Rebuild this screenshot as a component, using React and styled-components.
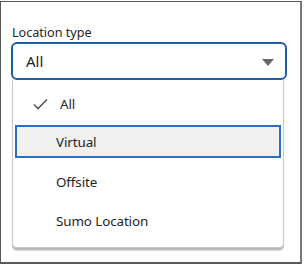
import React from 'react';
import styled, {createGlobalStyle} from 'styled-components';

const Global = createGlobalStyle`
  body {
    margin: 0;
    background: #fff;
    font-family: "Noto Sans", "Open Sans", sans-serif;
    color: #242424;
  }
`;

const Frame = styled.div`
  box-sizing: border-box;
  width: 302px;
  height: 263px;
  margin-top: 1px;
  border: 1px solid #5a5a5a;
  border-right: 2px solid #7a7a7a;
  border-bottom: 2px solid #5a5a5a;
  padding: 22px 0 0 10px;
`;

const Label = styled.div`
  font-size: 12.6px;
  line-height: 18px;
  margin-left: 1px;
  margin-bottom: 0;
`;

const SelectBox = styled.div`
  box-sizing: border-box;
  width: 276px;
  height: 38px;
  border: 2.5px solid #1c5ea9;
  border-radius: 6px;
  display: flex;
  align-items: center;
  justify-content: space-between;
  padding: 0 11px 0 13px;
  font-size: 15px;
`;

const Arrow = styled.span`
  width: 0;
  height: 0;
  border-left: 6px solid transparent;
  border-right: 6px solid transparent;
  border-top: 7px solid #666;
  margin-top: 2px;
`;

const Menu = styled.div`
  box-sizing: border-box;
  width: 272px;
  margin-left: 1px;
  border: 1px solid #c8c8c8;
  border-top: none;
  border-radius: 0 0 5px 5px;
  box-shadow: 0 2px 0 #b8b8b8, 0 3px 1px #ddd;
  padding: 4px 2px 7px 2px;
`;

const Item = styled.div`
  box-sizing: border-box;
  display: flex;
  align-items: center;
  padding-left: ${p => (p.$selected ? '16px' : '39px')};
  font-size: 13.4px;
  letter-spacing: -0.1px;
  border: 2px solid ${p => (p.$active ? '#2d6fc0' : 'transparent')};
  background: ${p => (p.$active ? '#f0f0f0' : 'transparent')};
  margin: ${p => (p.$active ? '2px 0 4px' : '0')};
  height: ${p => (p.$active ? '33px' : '39px')};
`;

const Check = styled.svg`
  width: 15px;
  height: 12px;
  margin-right: 12px;
`;

const items = ['All', 'Virtual', 'Offsite', 'Sumo Location'];

export default function App() {
    return (
        <>
            <Global/>
            <Frame>
                <Label>Location type</Label>
                <SelectBox>
                    <span>All</span>
                    <Arrow/>
                </SelectBox>
                <Menu>
                    {items.map(name => (
                        <Item key={name} $selected={name === 'All'} $active={name === 'Virtual'}>
                            {name === 'All' && (
                                <Check viewBox="0 0 15 12">
                                    <path d="M1 6.5 L5 10.5 L14 1.5" fill="none" stroke="#555" strokeWidth="1.6"/>
                                </Check>
                            )}
                            {name}
                        </Item>
                    ))}
                </Menu>
            </Frame>
        </>
    );
}
